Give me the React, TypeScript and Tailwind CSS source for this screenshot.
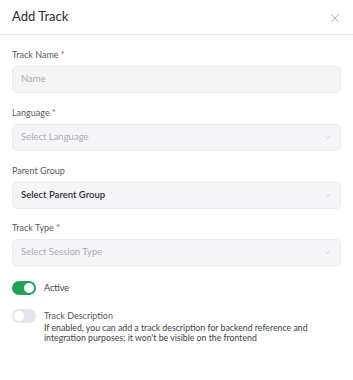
import { X, ChevronDown } from 'lucide-react'

function Label({ text, required }: { text: string; required?: boolean }) {
  return (
    <div className="text-[9px] leading-[12px] text-[#555b66]">
      {text}
      {required && <span className="text-[#e0243a]"> *</span>}
    </div>
  )
}

function Field({ placeholder, select, dark }: { placeholder: string; select?: boolean; dark?: boolean }) {
  return (
    <div className="mt-[5px] flex h-[27px] items-center justify-between rounded-[5px] border border-[#ececf0] bg-[#f5f5f8] pl-[8px] pr-[8px]">
      <span className={dark ? 'text-[9.5px] font-semibold text-[#2b2f36]' : 'text-[9.5px] text-[#a9adb5]'}>{placeholder}</span>
      {select && <ChevronDown size={9} strokeWidth={1.5} className="text-[#b5b8bf]" />}
    </div>
  )
}

function Toggle({ on }: { on?: boolean }) {
  return (
    <div className={on ? 'flex h-[14px] w-[24px] shrink-0 items-center justify-end rounded-full bg-[#1fa45c] pr-[2px]' : 'flex h-[14px] w-[24px] shrink-0 items-center rounded-full bg-[#e4e6eb] pl-[2px]'}>
      <div className="h-[10px] w-[10px] rounded-full bg-white" />
    </div>
  )
}

export default function App() {
  return (
    <div className="h-[380px] w-[353px] bg-white" style={{ fontFamily: 'Lato, "Noto Sans", sans-serif' }}>
      {/* Header */}
      <div className="flex h-[35px] items-center justify-between border-b border-[#e6e7ea] pl-[12px] pr-[11px]">
        <span className="text-[13px] text-[#2a2d33]">Add Track</span>
        <X size={14} strokeWidth={1.2} className="mt-[2px] text-[#8a8e96]" />
      </div>

      <div className="flex flex-col px-[12px] pt-[14px]">
        <Label text="Track Name" required />
        <Field placeholder="Name" />

        <div className="mt-[14px]"><Label text="Language" required /></div>
        <Field placeholder="Select Language" select />

        <div className="mt-[14px]"><Label text="Parent Group" /></div>
        <Field placeholder="Select Parent Group" select dark />

        <div className="mt-[13px]"><Label text="Track Type" required /></div>
        <Field placeholder="Select Session Type" select />

        <div className="mt-[15px] flex items-center gap-[8px]">
          <Toggle on />
          <span className="text-[9px] text-[#3b3f46]">Active</span>
        </div>

        <div className="mt-[14px] flex items-start gap-[8px]">
          <Toggle />
          <div className="text-[8.75px] leading-[10px] text-[#3b3f46]">
            <div className="text-[9px] leading-[14px] text-[#555b66]">Track Description</div>
            If enabled, you can add a track description for backend reference and integration purposes; it won't be visible on the frontend
          </div>
        </div>
      </div>
    </div>
  )
}
